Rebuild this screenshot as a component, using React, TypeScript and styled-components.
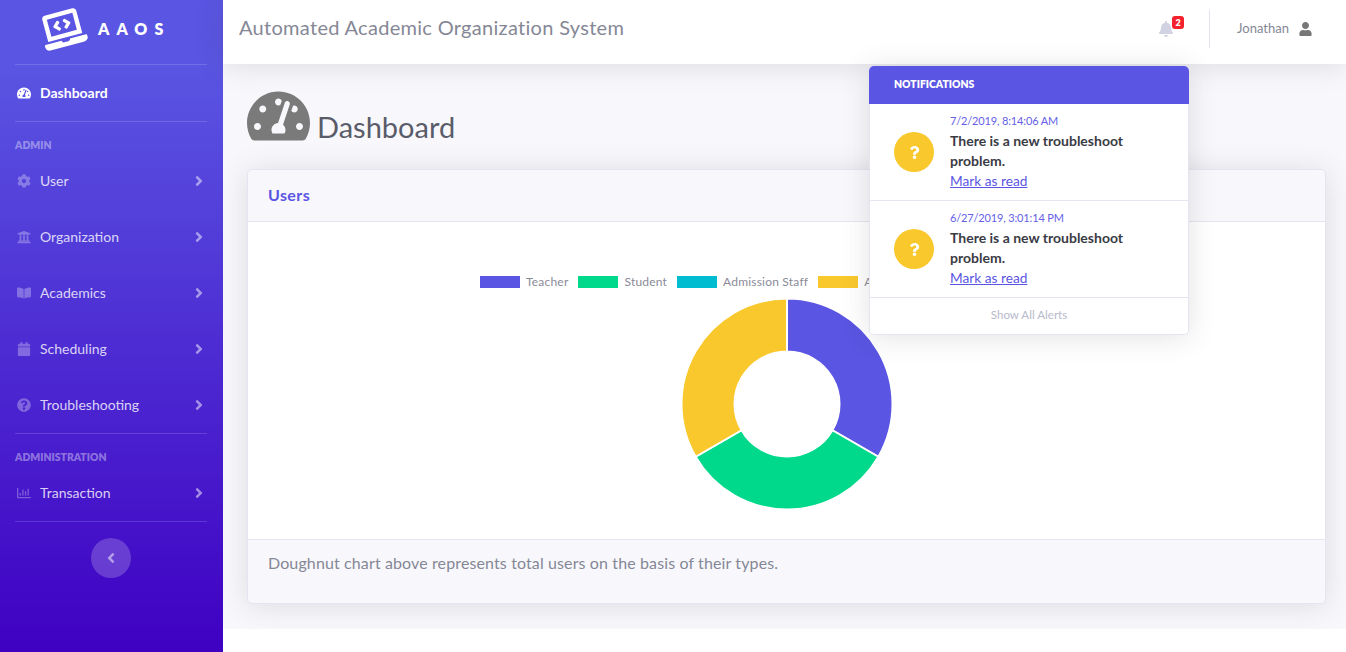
import React from 'react';
import styled, { createGlobalStyle } from 'styled-components';
import {
  FaAngleLeft,
  FaAngleRight,
  FaBell,
  FaBookOpen,
  FaCalendar,
  FaCog,
  FaLaptopCode,
  FaQuestion,
  FaQuestionCircle,
  FaRegChartBar,
  FaTachometerAlt,
  FaUniversity,
  FaUser,
} from 'react-icons/fa';

const GlobalStyle = createGlobalStyle`
  * {
    box-sizing: border-box;
  }

  body {
    margin: 0;
    background: #fff;
    font-family: Lato, "Open Sans", sans-serif;
    color: #858796;
  }
`;

const polar = (r: number, deg: number) => {
  const a = ((deg - 90) * Math.PI) / 180;
  return `${(110 + r * Math.cos(a)).toFixed(2)} ${(110 + r * Math.sin(a)).toFixed(2)}`;
};

const segment = (from: number, to: number) =>
  `M${polar(105.5, from)} A105.5 105.5 0 0 1 ${polar(105.5, to)} L${polar(52.5, to)} A52.5 52.5 0 0 0 ${polar(52.5, from)} Z`;

const menuGroups = [
  {
    title: 'Admin',
    items: [
      { label: 'User', icon: <FaCog /> },
      { label: 'Organization', icon: <FaUniversity /> },
      { label: 'Academics', icon: <FaBookOpen /> },
      { label: 'Scheduling', icon: <FaCalendar /> },
      { label: 'Troubleshooting', icon: <FaQuestionCircle /> },
    ],
  },
  {
    title: 'Administration',
    items: [{ label: 'Transaction', icon: <FaRegChartBar /> }],
  },
];

const legend = [
  { label: 'Teacher', color: '#5a55e2' },
  { label: 'Student', color: '#00d88c' },
  { label: 'Admission Staff', color: '#00bcd0' },
  { label: 'Admin', color: '#f9c82c' },
];

const alerts = ['7/2/2019, 8:14:06 AM', '6/27/2019, 3:01:14 PM'];

const App = () => (
  <Wrapper>
    <GlobalStyle />
    <Sidebar>
      <Brand>
        <LogoIcon />
        <BrandName>AAOS</BrandName>
      </Brand>
      <Divider />
      <NavItem $active>
        <NavIcon>
          <FaTachometerAlt />
        </NavIcon>
        <NavLabel>Dashboard</NavLabel>
      </NavItem>
      <Divider />
      {menuGroups.map((group) => (
        <React.Fragment key={group.title}>
          <GroupTitle>{group.title}</GroupTitle>
          {group.items.map((item) => (
            <NavItem key={item.label}>
              <NavIcon>{item.icon}</NavIcon>
              <NavLabel>{item.label}</NavLabel>
              <NavArrow />
            </NavItem>
          ))}
          <Divider />
        </React.Fragment>
      ))}
      <CollapseButton>
        <FaAngleLeft />
      </CollapseButton>
    </Sidebar>

    <Content>
      <Topbar>
        <TopbarTitle>Automated Academic Organization System</TopbarTitle>
        <BellWrap>
          <FaBell />
          <Badge>2</Badge>
        </BellWrap>
        <TopbarDivider />
        <UserName>Jonathan</UserName>
        <UserIcon />
        <Dropdown>
          <DropdownHeader>Notifications</DropdownHeader>
          {alerts.map((date) => (
            <AlertRow key={date}>
              <AlertCircle>
                <FaQuestion />
              </AlertCircle>
              <div>
                <AlertDate>{date}</AlertDate>
                <AlertText>There is a new troubleshoot problem.</AlertText>
                <AlertLink href="#">Mark as read</AlertLink>
              </div>
            </AlertRow>
          ))}
          <ShowAll>Show All Alerts</ShowAll>
        </Dropdown>
      </Topbar>

      <Main>
        <PageHeading>
          <FaTachometerAlt />
          <h1>Dashboard</h1>
        </PageHeading>
        <Card>
          <CardHeader>Users</CardHeader>
          <CardBody>
            <Legend>
              {legend.map((item) => (
                <LegendItem key={item.label}>
                  <LegendBox $color={item.color} />
                  {item.label}
                </LegendItem>
              ))}
            </Legend>
            <svg width="220" height="220" viewBox="0 0 220 220">
              <path d={segment(0, 120)} fill="#5a55e2" stroke="#fff" strokeWidth="2" />
              <path d={segment(120, 240)} fill="#00d88c" stroke="#fff" strokeWidth="2" />
              <path d={segment(240, 360)} fill="#f9c82c" stroke="#fff" strokeWidth="2" />
            </svg>
          </CardBody>
          <CardFooter>Doughnut chart above represents total users on the basis of their types.</CardFooter>
        </Card>
      </Main>
    </Content>
  </Wrapper>
);

const Wrapper = styled.div`
  display: flex;
  min-height: 652px;
`;

const Sidebar = styled.aside`
  flex: 0 0 223px;
  padding: 0 16px 0 15px;
  background: linear-gradient(180deg, #5a55e2 10%, #3f00c2 100%);
`;

const Brand = styled.div`
  display: flex;
  align-items: center;
  height: 64px;
  padding: 0 0 7px 26px;
`;

const LogoIcon = styled(FaLaptopCode)`
  width: 44px;
  height: 44px;
  color: #fff;
  transform: rotate(-15deg);
`;

const BrandName = styled.span`
  margin-left: 13px;
  font-size: 16px;
  font-weight: 800;
  letter-spacing: 7px;
  color: #fff;
`;

const Divider = styled.div`
  height: 1px;
  background: rgba(255, 255, 255, 0.15);
`;

const NavItem = styled.div<{ $active?: boolean }>`
  display: flex;
  align-items: center;
  height: 56px;
  font-size: 14px;
  font-weight: ${(p) => (p.$active ? 700 : 400)};
  color: ${(p) => (p.$active ? '#fff' : 'rgba(255, 255, 255, 0.8)')};

  svg {
    color: ${(p) => (p.$active ? '#fff' : 'rgba(255, 255, 255, 0.3)')};
  }
`;

const NavIcon = styled.span`
  display: flex;
  justify-content: center;
  width: 17px;
  margin-right: 8px;

  svg {
    width: auto;
    height: 14px;
  }
`;

const NavLabel = styled.span`
  flex: 1;
  padding-bottom: 2px;
`;

const NavArrow = styled(FaAngleRight)`
  width: 16px;
  height: 16px;

  && {
    color: rgba(255, 255, 255, 0.5);
  }
`;

const GroupTitle = styled.div`
  padding-top: 17px;
  height: 31px;
  font-size: 10.4px;
  line-height: 13px;
  font-weight: 800;
  text-transform: uppercase;
  color: rgba(255, 255, 255, 0.4);
`;

const CollapseButton = styled.div`
  display: flex;
  align-items: center;
  justify-content: center;
  width: 40px;
  height: 40px;
  margin: 16px 0 0 76px;
  border-radius: 50%;
  background: rgba(255, 255, 255, 0.2);
  font-size: 16px;
  color: rgba(255, 255, 255, 0.5);
`;

const Content = styled.div`
  flex: 1;
  min-width: 0;
`;

const Topbar = styled.header`
  position: relative;
  z-index: 2;
  display: flex;
  align-items: center;
  height: 64px;
  padding: 0 34px 7px 16px;
  background: #fff;
  box-shadow: 0 2px 28px rgba(58, 59, 69, 0.15);
`;

const TopbarTitle = styled.div`
  flex: 1;
  margin-bottom: 3px;
  font-size: 20px;
  letter-spacing: 0.3px;
  color: #858796;
`;

const BellWrap = styled.div`
  position: relative;
  display: flex;
  color: #d1d3e2;

  svg {
    width: auto;
    height: 16px;
  }
`;

const Badge = styled.span`
  position: absolute;
  top: -5px;
  left: 14px;
  width: 12px;
  height: 13px;
  border-radius: 3px;
  background: #f5222d;
  font-size: 9px;
  font-weight: 800;
  line-height: 13px;
  text-align: center;
  color: #fff;
`;

const TopbarDivider = styled.div`
  width: 1px;
  height: 38px;
  margin: 0 27px 0 35px;
  background: #e3e6f0;
`;

const UserName = styled.span`
  margin-bottom: 2px;
  font-size: 13px;
  color: #858796;
`;

const UserIcon = styled(FaUser)`
  width: 13px;
  height: 14px;
  margin-left: 10px;
  color: #777;
`;

const Dropdown = styled.div`
  position: absolute;
  top: 66px;
  left: 646px;
  width: 320px;
  border-radius: 5px;
  background: #fff;
  box-shadow: 0 2px 28px rgba(58, 59, 69, 0.15);
`;

const DropdownHeader = styled.div`
  height: 38px;
  padding-left: 25px;
  border-radius: 5px 5px 0 0;
  background: #5a55e2;
  font-size: 10.4px;
  font-weight: 800;
  line-height: 37px;
  text-transform: uppercase;
  color: #fff;
`;

const AlertRow = styled.div`
  display: flex;
  align-items: center;
  height: 97px;
  padding: 0 24px;
  border: solid #e3e6f0;
  border-width: 0 1px 1px;
`;

const AlertCircle = styled.div`
  flex: 0 0 40px;
  display: flex;
  align-items: center;
  justify-content: center;
  height: 40px;
  margin-right: 16px;
  border-radius: 50%;
  background: #f9c82c;
  font-size: 13px;
  color: #fff;
`;

const AlertDate = styled.div`
  margin-bottom: 2px;
  font-size: 11px;
  line-height: 16px;
  letter-spacing: -0.15px;
  color: #6560e6;
`;

const AlertText = styled.div`
  font-size: 14px;
  font-weight: 700;
  line-height: 20px;
  color: #3a3b45;
`;

const AlertLink = styled.a`
  display: block;
  font-size: 13.7px;
  line-height: 20px;
  color: #5a55e2;
`;

const ShowAll = styled.div`
  height: 37px;
  border: solid #e3e6f0;
  border-width: 0 1px 1px;
  border-radius: 0 0 5px 5px;
  font-size: 11.6px;
  line-height: 34px;
  text-align: center;
  color: #b7b9cc;
`;

const Main = styled.main`
  padding: 0 20px 25px 24px;
  background: #f8f8fc;
`;

const PageHeading = styled.div`
  display: flex;
  align-items: flex-end;
  height: 105px;
  padding-bottom: 24px;

  svg {
    width: 63px;
    height: 56px;
    margin-bottom: 1px;
    color: #7a7a7a;
  }

  h1 {
    margin: 0 0 1px 7px;
    font-size: 29px;
    font-weight: 400;
    color: #5a5c69;
  }
`;

const Card = styled.section`
  height: 435px;
  display: flex;
  flex-direction: column;
  border: 1px solid #e3e6f0;
  border-radius: 5px;
  background: #f8f8fc;
  box-shadow: 0 2px 28px rgba(58, 59, 69, 0.15);
`;

const CardHeader = styled.div`
  height: 52px;
  padding-left: 20px;
  border-bottom: 1px solid #e3e6f0;
  font-size: 16px;
  font-weight: 700;
  letter-spacing: 0.4px;
  line-height: 50px;
  color: #5a55e2;
`;

const CardBody = styled.div`
  flex: 1;
  display: flex;
  flex-direction: column;
  align-items: center;
  padding-top: 54px;
  background: #fff;
`;

const Legend = styled.div`
  align-self: flex-start;
  display: flex;
  gap: 10px;
  height: 18px;
  margin-left: 232px;
`;

const LegendItem = styled.div`
  display: flex;
  gap: 6px;
  font-size: 12px;
  line-height: 12px;
  letter-spacing: 0.2px;
  color: #8a8a98;
`;

const LegendBox = styled.span<{ $color: string }>`
  width: 40px;
  height: 12px;
  background: ${(p) => p.$color};
`;

const CardFooter = styled.div`
  height: 64px;
  padding: 13px 20px 0;
  border-top: 1px solid #e3e6f0;
  font-size: 16px;
  letter-spacing: 0.12px;
  line-height: 20px;
  color: #858796;
`;

export default App;
